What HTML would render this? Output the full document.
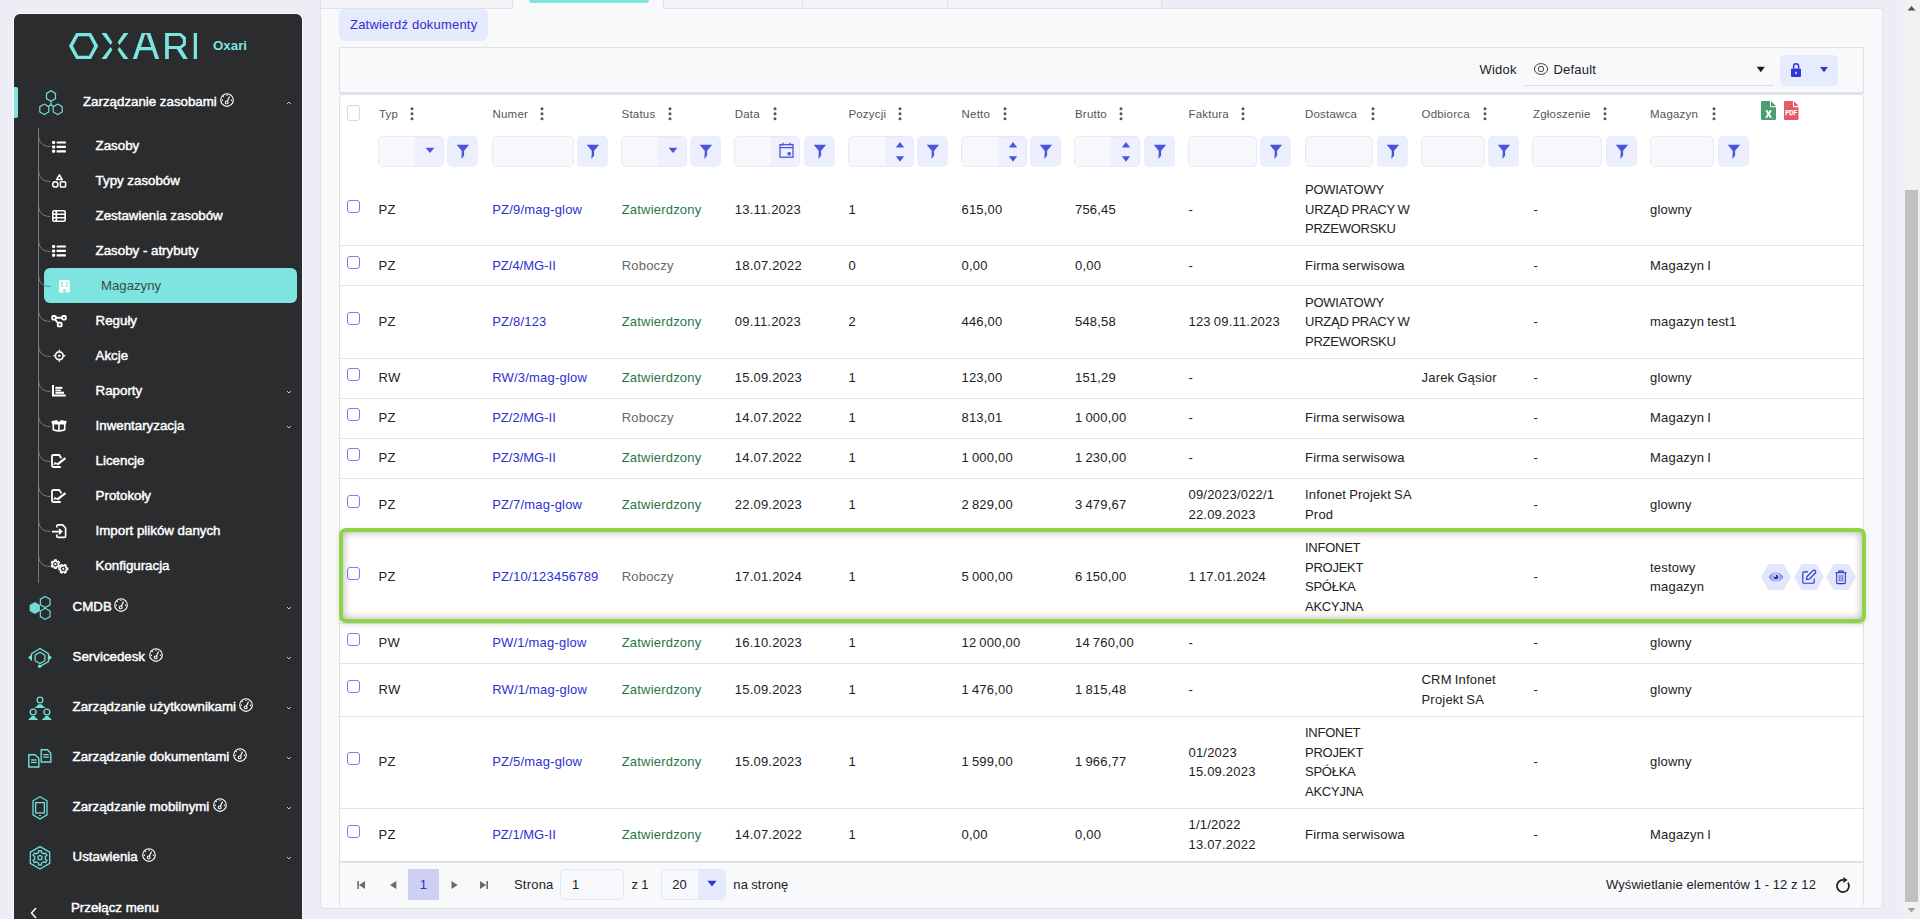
<!DOCTYPE html>
<html><head><meta charset="utf-8"><style>
html,body{margin:0;padding:0}
body{width:1920px;height:919px;overflow:hidden;position:relative;background:#ededf6;font-family:"Liberation Sans",sans-serif;}
.t{position:absolute;white-space:nowrap;line-height:1}
.a{position:absolute}
svg{position:absolute;overflow:visible}
</style></head><body>

<div class="a" style="left:13px;top:13px;width:290px;height:920px;background:#fff;border-radius:7px;opacity:.7"></div>
<div class="a" style="left:14px;top:14px;width:288px;height:920px;background:#2b2c2e;border-radius:6px"></div>
<svg style="left:0;top:0" width="320" height="80" viewBox="0 0 320 80"><g fill="#7de5e0" fill-rule="evenodd">
<path d="M76.1 33 H91.1 L98.2 46 L91.1 59 H76.1 L69 46 Z M78.2 36.3 L73 46 L78.2 55.7 H89 L94.2 46 L89 36.3 Z"/>
<path d="M101.5 33 H106.3 L112.4 42.2 L110.6 45 Z"/>
<path d="M110.6 47 L112.4 49.8 L106.3 59 H101.5 Z"/>
<path d="M128.5 33 H123.7 L117.6 42.2 L119.4 45 Z"/>
<path d="M119.4 47 L117.6 49.8 L123.7 59 H128.5 Z"/>
<path d="M132.8 59 L141.7 33 H150.3 L159.2 59 H155.2 L152.3 50.2 H139.6 L136.8 59 Z M141 46.9 H151.2 L146.6 34.5 H145 Z"/>
<path d="M165.1 33 H180.8 L185.9 37.3 V45 L181.4 48.6 L187.8 59 H183.3 L176.8 49 H168.8 V59 H165.1 Z M168.8 36.1 V45.9 H179.9 L182.9 43.4 V39.6 L179.9 36.1 Z"/>
<rect x="193.7" y="33" width="3.3" height="26"/>
</g></svg>
<div class="t" style="left:213px;top:39.44px;font-size:13.3px;color:#7de5e0;font-weight:bold;">Oxari</div>
<div class="a" style="left:14px;top:87px;width:4px;height:31px;background:#7de5e0;border-radius:0 2px 2px 0"></div>
<svg style="left:34px;top:86px" width="36" height="34" viewBox="34 86 36 34"><g fill="none" stroke="#73dcd6" stroke-width="1.2">
<polygon points="51.00,90.80 55.50,93.40 55.50,98.60 51.00,101.20 46.50,98.60 46.50,93.40"/><polygon points="44.30,104.10 48.80,106.70 48.80,111.90 44.30,114.50 39.80,111.90 39.80,106.70"/><polygon points="57.70,104.10 62.20,106.70 62.20,111.90 57.70,114.50 53.20,111.90 53.20,106.70"/>
<path d="M51 101.2 V104.6 M51 104.6 L48.8 106.2 M51 104.6 L53.2 106.2"/></g></svg>
<div class="t" style="left:83px;top:94.54px;font-size:13.3px;color:#fff;font-weight:normal;-webkit-text-stroke:.45px #fff">Zarządzanie zasobami</div>
<svg style="left:219px;top:92px" width="16" height="16" viewBox="-8 -8 16 16"><g fill="none" stroke="#fff" stroke-width="1.15"><circle r="6.3"/><path d="M0.3 1.6 L2.5 -3.4"/></g><circle cx="-0.3" cy="2.4" r="1.4" fill="none" stroke="#fff" stroke-width="1.1"/><g fill="#fff"><circle cx="-3.6" cy="-3.4" r=".7"/><circle cx="0" cy="-4.7" r=".7"/><circle cx="-4.6" cy="0.2" r=".7"/><circle cx="4.4" cy="0.2" r=".7"/></g></svg>
<svg style="left:285px;top:99px" width="8" height="8" viewBox="-4 -4 8 8"><path d="M-2 1 L0 -1 L2 1" fill="none" stroke="#bfc0c2" stroke-width="1"/></svg>
<div class="a" style="left:38px;top:128px;width:1px;height:455px;background:#7a7b7d"></div>
<div class="a" style="left:44px;top:268px;width:253px;height:35px;background:#7de4e0;border-radius:6px"></div>
<svg style="left:38px;top:134.0px" width="14" height="16" viewBox="0 0 14 16"><path d="M.5 0 C.5 8 4 12.5 12.5 12.5" fill="none" stroke="#7a7b7d" stroke-width="1"/></svg>
<svg style="left:52.3px;top:140.7px" width="17" height="15" viewBox="0 0 17 15"><g fill="#fff"><rect x="0" y="0" width="3.2" height="3" rx="1"/><rect x="0" y="4.4" width="3.2" height="3" rx="1"/><rect x="0" y="8.8" width="3.2" height="3" rx="1"/><rect x="4.6" y=".4" width="9.3" height="2.2" rx=".5"/><rect x="4.6" y="4.8" width="9.3" height="2.2" rx=".5"/><rect x="4.6" y="9.2" width="9.3" height="2.2" rx=".5"/></g></svg>
<div class="t" style="left:95.6px;top:138.84px;font-size:13.3px;color:#fff;font-weight:normal;-webkit-text-stroke:.45px #fff">Zasoby</div>
<svg style="left:38px;top:169.0px" width="14" height="16" viewBox="0 0 14 16"><path d="M.5 0 C.5 8 4 12.5 12.5 12.5" fill="none" stroke="#7a7b7d" stroke-width="1"/></svg>
<svg style="left:52.3px;top:174.2px" width="17" height="15" viewBox="0 0 17 15"><g fill="none" stroke="#fff" stroke-width="1.5"><path d="M7.4 0.9 L10.3 5.6 H4.5 Z" stroke-linejoin="round"/><circle cx="3.3" cy="10.4" r="2.6"/><rect x="8.4" y="7.7" width="5.2" height="5.3" rx=".8"/></g></svg>
<div class="t" style="left:95.6px;top:173.84px;font-size:13.3px;color:#fff;font-weight:normal;-webkit-text-stroke:.45px #fff">Typy zasobów</div>
<svg style="left:38px;top:204.0px" width="14" height="16" viewBox="0 0 14 16"><path d="M.5 0 C.5 8 4 12.5 12.5 12.5" fill="none" stroke="#7a7b7d" stroke-width="1"/></svg>
<svg style="left:52.3px;top:210px" width="17" height="15" viewBox="0 0 17 15"><g fill="none" stroke="#fff" stroke-width="1.6"><rect x=".8" y=".8" width="12.4" height="10.4" rx="1.4"/><path d="M.8 4.3 H13.2 M.8 7.8 H13.2 M4.3 .8 V11.2"/></g></svg>
<div class="t" style="left:95.6px;top:208.84px;font-size:13.3px;color:#fff;font-weight:normal;-webkit-text-stroke:.45px #fff">Zestawienia zasobów</div>
<svg style="left:38px;top:239.0px" width="14" height="16" viewBox="0 0 14 16"><path d="M.5 0 C.5 8 4 12.5 12.5 12.5" fill="none" stroke="#7a7b7d" stroke-width="1"/></svg>
<svg style="left:52.3px;top:245px" width="17" height="15" viewBox="0 0 17 15"><g fill="#fff"><rect x="0" y="0" width="3.2" height="3" rx="1"/><rect x="0" y="4.4" width="3.2" height="3" rx="1"/><rect x="0" y="8.8" width="3.2" height="3" rx="1"/><rect x="4.6" y=".4" width="9.3" height="2.2" rx=".5"/><rect x="4.6" y="4.8" width="9.3" height="2.2" rx=".5"/><rect x="4.6" y="9.2" width="9.3" height="2.2" rx=".5"/></g></svg>
<div class="t" style="left:95.6px;top:243.84px;font-size:13.3px;color:#fff;font-weight:normal;-webkit-text-stroke:.45px #fff">Zasoby - atrybuty</div>
<svg style="left:38px;top:274.0px" width="14" height="16" viewBox="0 0 14 16"><path d="M.5 0 C.5 8 4 12.5 12.5 12.5" fill="none" stroke="#7a7b7d" stroke-width="1"/></svg>
<svg style="left:58.7px;top:279.8px" width="17" height="15" viewBox="0 0 17 15"><g><rect x="0" y="0" width="10.8" height="12.5" rx="1.2" fill="#fff"/><g fill="#7de4e0"><rect x="2.2" y="2" width="1.8" height="1.8"/><rect x="6.8" y="2" width="1.8" height="1.8"/><rect x="2.2" y="5" width="1.8" height="1.8"/><rect x="6.8" y="5" width="1.8" height="1.8"/><rect x="4.3" y="9" width="2.2" height="3.5"/></g></g></svg>
<div class="t" style="left:101px;top:278.93px;font-size:13.2px;color:#3a4a4c;font-weight:normal;">Magazyny</div>
<svg style="left:38px;top:309.0px" width="14" height="16" viewBox="0 0 14 16"><path d="M.5 0 C.5 8 4 12.5 12.5 12.5" fill="none" stroke="#7a7b7d" stroke-width="1"/></svg>
<svg style="left:51.4px;top:315px" width="17" height="15" viewBox="0 0 17 15"><g fill="none" stroke="#fff" stroke-width="1.9"><rect x="1.2" y="1" width="3.6" height="3.6" rx="1"/><rect x="11.2" y="1" width="3.6" height="3.6" rx="1"/><rect x="6.8" y="7.8" width="3.8" height="3.6" rx="1"/><path d="M4.8 2.8 H11.2 M4 4.6 L7 7.8"/></g></svg>
<div class="t" style="left:95.6px;top:313.84px;font-size:13.3px;color:#fff;font-weight:normal;-webkit-text-stroke:.45px #fff">Reguły</div>
<svg style="left:38px;top:344.0px" width="14" height="16" viewBox="0 0 14 16"><path d="M.5 0 C.5 8 4 12.5 12.5 12.5" fill="none" stroke="#7a7b7d" stroke-width="1"/></svg>
<svg style="left:52.8px;top:349px" width="17" height="15" viewBox="0 0 17 15"><g fill="none" stroke="#fff" stroke-width="1.7"><circle cx="6.3" cy="6.8" r="3.9"/></g><circle cx="6.3" cy="6.8" r="1.3" fill="#fff"/><g fill="#fff"><path d="M5.3 2.2 L6.3 0 L7.3 2.2 Z"/><path d="M5.3 11.4 L6.3 13.6 L7.3 11.4 Z"/><path d="M1.7 5.8 L-.5 6.8 L1.7 7.8 Z"/><path d="M10.9 5.8 L13.1 6.8 L10.9 7.8 Z"/></g></svg>
<div class="t" style="left:95.6px;top:348.84px;font-size:13.3px;color:#fff;font-weight:normal;-webkit-text-stroke:.45px #fff">Akcje</div>
<svg style="left:38px;top:379.0px" width="14" height="16" viewBox="0 0 14 16"><path d="M.5 0 C.5 8 4 12.5 12.5 12.5" fill="none" stroke="#7a7b7d" stroke-width="1"/></svg>
<svg style="left:52.1px;top:385.2px" width="17" height="15" viewBox="0 0 17 15"><g fill="none" stroke="#fff" stroke-width="2"><path d="M1 0 V10.6 H13.8"/></g><g fill="#fff"><rect x="3.4" y="1.8" width="7" height="2.1"/><rect x="3.4" y="4.6" width="5.6" height="1.6"/><rect x="3.4" y="6.7" width="8.6" height="2.1"/></g></svg>
<div class="t" style="left:95.6px;top:383.84px;font-size:13.3px;color:#fff;font-weight:normal;-webkit-text-stroke:.45px #fff">Raporty</div>
<svg style="left:285px;top:387.5px" width="8" height="8" viewBox="-4 -4 8 8"><path d="M-2 -1 L0 1 L2 -1" fill="none" stroke="#bfc0c2" stroke-width="1"/></svg>
<svg style="left:38px;top:414.0px" width="14" height="16" viewBox="0 0 14 16"><path d="M.5 0 C.5 8 4 12.5 12.5 12.5" fill="none" stroke="#7a7b7d" stroke-width="1"/></svg>
<svg style="left:51px;top:420px" width="17" height="15" viewBox="0 0 17 15"><path d="M.3 1.2 L5.8 0 L8 2 L10.2 0 L15.7 1.2 L14.8 4.4 H1.2 Z" fill="#fff"/><g fill="none" stroke="#fff" stroke-width="1.6"><path d="M2.3 4 V9.8 Q8 12.2 13.7 9.8 V4"/><path d="M8 2.5 V11"/></g></svg>
<div class="t" style="left:95.6px;top:418.84px;font-size:13.3px;color:#fff;font-weight:normal;-webkit-text-stroke:.45px #fff">Inwentaryzacja</div>
<svg style="left:285px;top:422.5px" width="8" height="8" viewBox="-4 -4 8 8"><path d="M-2 -1 L0 1 L2 -1" fill="none" stroke="#bfc0c2" stroke-width="1"/></svg>
<svg style="left:38px;top:449.0px" width="14" height="16" viewBox="0 0 14 16"><path d="M.5 0 C.5 8 4 12.5 12.5 12.5" fill="none" stroke="#7a7b7d" stroke-width="1"/></svg>
<svg style="left:51.2px;top:454.2px" width="17" height="15" viewBox="0 0 17 15"><g fill="none" stroke="#fff" stroke-width="1.8"><path d="M10.4 4.2 L8.2 1 H2.2 A1.2 1.2 0 0 0 1 2.2 V11.8 A1.2 1.2 0 0 0 2.2 13 H9.8"/></g><path d="M6.2 10.6 L14.4 4.2" stroke="#fff" stroke-width="2.3" fill="none"/><path d="M2.8 11 L4 8.6 L5 10 L6 8.8" stroke="#fff" stroke-width="1.1" fill="none"/></svg>
<div class="t" style="left:95.6px;top:453.84px;font-size:13.3px;color:#fff;font-weight:normal;-webkit-text-stroke:.45px #fff">Licencje</div>
<svg style="left:38px;top:484.0px" width="14" height="16" viewBox="0 0 14 16"><path d="M.5 0 C.5 8 4 12.5 12.5 12.5" fill="none" stroke="#7a7b7d" stroke-width="1"/></svg>
<svg style="left:51.2px;top:489.4px" width="17" height="15" viewBox="0 0 17 15"><g fill="none" stroke="#fff" stroke-width="1.8"><path d="M10.4 4.2 L8.2 1 H2.2 A1.2 1.2 0 0 0 1 2.2 V11.8 A1.2 1.2 0 0 0 2.2 13 H9.8"/></g><path d="M6.2 10.6 L14.4 4.2" stroke="#fff" stroke-width="2.3" fill="none"/><path d="M2.8 11 L4 8.6 L5 10 L6 8.8" stroke="#fff" stroke-width="1.1" fill="none"/></svg>
<div class="t" style="left:95.6px;top:488.84px;font-size:13.3px;color:#fff;font-weight:normal;-webkit-text-stroke:.45px #fff">Protokoły</div>
<svg style="left:38px;top:519.0px" width="14" height="16" viewBox="0 0 14 16"><path d="M.5 0 C.5 8 4 12.5 12.5 12.5" fill="none" stroke="#7a7b7d" stroke-width="1"/></svg>
<svg style="left:52px;top:524.2px" width="17" height="15" viewBox="0 0 17 15"><g fill="none" stroke="#fff" stroke-width="1.7"><path d="M4.8 3.6 V2 A1.2 1.2 0 0 1 6 .9 H10.6 L13.6 4 V12.2 A1.2 1.2 0 0 1 12.4 13.3 H6 A1.2 1.2 0 0 1 4.8 12.2 V10.6"/><path d="M0 7.6 H9.6 M7 5 L9.6 7.6 L7 10.2"/></g></svg>
<div class="t" style="left:95.6px;top:523.84px;font-size:13.3px;color:#fff;font-weight:normal;-webkit-text-stroke:.45px #fff">Import plików danych</div>
<svg style="left:38px;top:554.0px" width="14" height="16" viewBox="0 0 14 16"><path d="M.5 0 C.5 8 4 12.5 12.5 12.5" fill="none" stroke="#7a7b7d" stroke-width="1"/></svg>
<svg style="left:50.6px;top:559.7px" width="17" height="15" viewBox="0 0 17 15"><g fill="none" stroke="#fff" stroke-width="1.5" stroke-linejoin="round"><path d="M2.95 1.69 L3.57 1.42 L3.53 0.09 L5.27 0.09 L5.23 1.42 L5.85 1.69 L6.39 2.09 L7.52 1.39 L8.39 2.90 L7.22 3.53 L7.30 4.20 L7.22 4.87 L8.39 5.50 L7.52 7.01 L6.39 6.31 L5.85 6.71 L5.23 6.98 L5.27 8.31 L3.53 8.31 L3.57 6.98 L2.95 6.71 L2.41 6.31 L1.28 7.01 L0.41 5.50 L1.58 4.87 L1.50 4.20 L1.58 3.53 L0.41 2.90 L1.28 1.39 L2.41 2.09 Z"/><path d="M12.30 5.80 L13.00 5.88 L13.66 4.62 L15.24 5.53 L14.48 6.74 L14.90 7.30 L15.18 7.94 L16.60 7.89 L16.60 9.71 L15.18 9.66 L14.90 10.30 L14.48 10.86 L15.24 12.07 L13.66 12.98 L13.00 11.72 L12.30 11.80 L11.60 11.72 L10.94 12.98 L9.36 12.07 L10.12 10.86 L9.70 10.30 L9.42 9.66 L8.00 9.71 L8.00 7.89 L9.42 7.94 L9.70 7.30 L10.12 6.74 L9.36 5.53 L10.94 4.62 L11.60 5.88 Z"/></g><circle cx="4.4" cy="4.2" r="1.1" fill="#fff"/><circle cx="12.3" cy="8.8" r="1.1" fill="#fff"/></svg>
<div class="t" style="left:95.6px;top:558.84px;font-size:13.3px;color:#fff;font-weight:normal;-webkit-text-stroke:.45px #fff">Konfiguracja</div>
<svg style="left:0;top:0" width="320" height="919" viewBox="0 0 320 919"><polygon points="34.80,602.10 39.91,605.05 39.91,610.95 34.80,613.90 29.69,610.95 29.69,605.05" fill="#73dcd6"/><g fill="none" stroke="#73dcd6" stroke-width="1.2"><polygon points="45.20,596.40 50.05,599.20 50.05,604.80 45.20,607.60 40.35,604.80 40.35,599.20"/><polygon points="45.20,608.20 50.05,611.00 50.05,616.60 45.20,619.40 40.35,616.60 40.35,611.00"/></g><g fill="none" stroke="#73dcd6" stroke-width="1.3"><polygon points="40.00,652.30 44.85,655.10 44.85,660.70 40.00,663.50 35.15,660.70 35.15,655.10"/><path d="M31.6 655.6 V653.6 L40 648.4 L48.4 653.6 V661.6 L40.5 666.1"/></g><polygon points="28,657.6 32,654.0 32,661.2" fill="#73dcd6"/><polygon points="52,657.6 48,654.0 48,661.2" fill="#73dcd6"/><circle cx="39.6" cy="666.2" r="1.7" fill="#73dcd6"/><g fill="none" stroke="#73dcd6" stroke-width="1.3"><circle cx="40" cy="700" r="2.9"/><circle cx="33.1" cy="712" r="2.9"/><circle cx="46.9" cy="712" r="2.9"/></g><g fill="#73dcd6"><path d="M34.5 708 L38.8 704.2 H41.2 L45.5 708 Z"/><path d="M28 720 L32 716 H34.2 L38.3 720 Z"/><path d="M41.7 720 L45.8 716 H48 L52 720 Z"/></g><g fill="none" stroke="#73dcd6" stroke-width="1.4"><path d="M28.8 754.7 H35 L38.8 758.3 V767 H28.8 Z"/><path d="M41.2 749.7 H47.4 L50.8 753.3 V762 H41.2 Z"/></g><g fill="#73dcd6"><rect x="31" y="759.3" width="5.6" height="1.3"/><rect x="31" y="761.8" width="5.6" height="1.3"/><rect x="43.2" y="754" width="5.6" height="1.3"/><rect x="43.2" y="756.5" width="5.6" height="1.3"/></g><g fill="none" stroke="#73dcd6" stroke-width="1.3"><path d="M40 796.8 L47 800.8 V814.8 L40 819 L33 814.8 V800.8 Z"/><rect x="35.6" y="802.6" width="8.8" height="10.4"/></g><rect x="39" y="815" width="2" height="1.2" fill="#73dcd6"/><g fill="none" stroke="#73dcd6" stroke-width="1.3"><polygon points="40.00,846.60 49.70,852.20 49.70,863.40 40.00,869.00 30.30,863.40 30.30,852.20"/><path d="M37.30 853.12 L38.57 852.59 L38.61 850.53 L41.39 850.53 L41.43 852.59 L42.70 853.12 L43.79 853.96 L45.60 852.96 L46.99 855.37 L45.23 856.44 L45.40 857.80 L45.23 859.16 L46.99 860.23 L45.60 862.64 L43.79 861.64 L42.70 862.48 L41.43 863.01 L41.39 865.07 L38.61 865.07 L38.57 863.01 L37.30 862.48 L36.21 861.64 L34.40 862.64 L33.01 860.23 L34.77 859.16 L34.60 857.80 L34.77 856.44 L33.01 855.37 L34.40 852.96 L36.21 853.96 Z" stroke-linejoin="round"/><circle cx="40" cy="857.8" r="2.1"/></g></svg>
<div class="t" style="left:72.6px;top:599.74px;font-size:13.3px;color:#fff;font-weight:normal;-webkit-text-stroke:.45px #fff">CMDB</div>
<svg style="left:112.5px;top:597.1px" width="16" height="16" viewBox="-8 -8 16 16"><g fill="none" stroke="#fff" stroke-width="1.15"><circle r="6.3"/><path d="M0.3 1.6 L2.5 -3.4"/></g><circle cx="-0.3" cy="2.4" r="1.4" fill="none" stroke="#fff" stroke-width="1.1"/><g fill="#fff"><circle cx="-3.6" cy="-3.4" r=".7"/><circle cx="0" cy="-4.7" r=".7"/><circle cx="-4.6" cy="0.2" r=".7"/><circle cx="4.4" cy="0.2" r=".7"/></g></svg>
<svg style="left:285px;top:603.5px" width="8" height="8" viewBox="-4 -4 8 8"><path d="M-2 -1 L0 1 L2 -1" fill="none" stroke="#bfc0c2" stroke-width="1"/></svg>
<div class="t" style="left:72.6px;top:649.74px;font-size:13.3px;color:#fff;font-weight:normal;-webkit-text-stroke:.45px #fff">Servicedesk</div>
<svg style="left:148.3px;top:647.1px" width="16" height="16" viewBox="-8 -8 16 16"><g fill="none" stroke="#fff" stroke-width="1.15"><circle r="6.3"/><path d="M0.3 1.6 L2.5 -3.4"/></g><circle cx="-0.3" cy="2.4" r="1.4" fill="none" stroke="#fff" stroke-width="1.1"/><g fill="#fff"><circle cx="-3.6" cy="-3.4" r=".7"/><circle cx="0" cy="-4.7" r=".7"/><circle cx="-4.6" cy="0.2" r=".7"/><circle cx="4.4" cy="0.2" r=".7"/></g></svg>
<svg style="left:285px;top:653.5px" width="8" height="8" viewBox="-4 -4 8 8"><path d="M-2 -1 L0 1 L2 -1" fill="none" stroke="#bfc0c2" stroke-width="1"/></svg>
<div class="t" style="left:72.6px;top:699.74px;font-size:13.3px;color:#fff;font-weight:normal;-webkit-text-stroke:.45px #fff">Zarządzanie użytkownikami</div>
<svg style="left:238.2px;top:697.1px" width="16" height="16" viewBox="-8 -8 16 16"><g fill="none" stroke="#fff" stroke-width="1.15"><circle r="6.3"/><path d="M0.3 1.6 L2.5 -3.4"/></g><circle cx="-0.3" cy="2.4" r="1.4" fill="none" stroke="#fff" stroke-width="1.1"/><g fill="#fff"><circle cx="-3.6" cy="-3.4" r=".7"/><circle cx="0" cy="-4.7" r=".7"/><circle cx="-4.6" cy="0.2" r=".7"/><circle cx="4.4" cy="0.2" r=".7"/></g></svg>
<svg style="left:285px;top:703.5px" width="8" height="8" viewBox="-4 -4 8 8"><path d="M-2 -1 L0 1 L2 -1" fill="none" stroke="#bfc0c2" stroke-width="1"/></svg>
<div class="t" style="left:72.6px;top:749.74px;font-size:13.3px;color:#fff;font-weight:normal;-webkit-text-stroke:.45px #fff">Zarządzanie dokumentami</div>
<svg style="left:232px;top:747.1px" width="16" height="16" viewBox="-8 -8 16 16"><g fill="none" stroke="#fff" stroke-width="1.15"><circle r="6.3"/><path d="M0.3 1.6 L2.5 -3.4"/></g><circle cx="-0.3" cy="2.4" r="1.4" fill="none" stroke="#fff" stroke-width="1.1"/><g fill="#fff"><circle cx="-3.6" cy="-3.4" r=".7"/><circle cx="0" cy="-4.7" r=".7"/><circle cx="-4.6" cy="0.2" r=".7"/><circle cx="4.4" cy="0.2" r=".7"/></g></svg>
<svg style="left:285px;top:753.5px" width="8" height="8" viewBox="-4 -4 8 8"><path d="M-2 -1 L0 1 L2 -1" fill="none" stroke="#bfc0c2" stroke-width="1"/></svg>
<div class="t" style="left:72.6px;top:799.74px;font-size:13.3px;color:#fff;font-weight:normal;-webkit-text-stroke:.45px #fff">Zarządzanie mobilnymi</div>
<svg style="left:211.5px;top:797.1px" width="16" height="16" viewBox="-8 -8 16 16"><g fill="none" stroke="#fff" stroke-width="1.15"><circle r="6.3"/><path d="M0.3 1.6 L2.5 -3.4"/></g><circle cx="-0.3" cy="2.4" r="1.4" fill="none" stroke="#fff" stroke-width="1.1"/><g fill="#fff"><circle cx="-3.6" cy="-3.4" r=".7"/><circle cx="0" cy="-4.7" r=".7"/><circle cx="-4.6" cy="0.2" r=".7"/><circle cx="4.4" cy="0.2" r=".7"/></g></svg>
<svg style="left:285px;top:803.5px" width="8" height="8" viewBox="-4 -4 8 8"><path d="M-2 -1 L0 1 L2 -1" fill="none" stroke="#bfc0c2" stroke-width="1"/></svg>
<div class="t" style="left:72.6px;top:849.74px;font-size:13.3px;color:#fff;font-weight:normal;-webkit-text-stroke:.45px #fff">Ustawienia</div>
<svg style="left:140.6px;top:847.1px" width="16" height="16" viewBox="-8 -8 16 16"><g fill="none" stroke="#fff" stroke-width="1.15"><circle r="6.3"/><path d="M0.3 1.6 L2.5 -3.4"/></g><circle cx="-0.3" cy="2.4" r="1.4" fill="none" stroke="#fff" stroke-width="1.1"/><g fill="#fff"><circle cx="-3.6" cy="-3.4" r=".7"/><circle cx="0" cy="-4.7" r=".7"/><circle cx="-4.6" cy="0.2" r=".7"/><circle cx="4.4" cy="0.2" r=".7"/></g></svg>
<svg style="left:285px;top:853.5px" width="8" height="8" viewBox="-4 -4 8 8"><path d="M-2 -1 L0 1 L2 -1" fill="none" stroke="#bfc0c2" stroke-width="1"/></svg>
<div class="t" style="left:71px;top:900.74px;font-size:13.3px;color:#fff;font-weight:normal;-webkit-text-stroke:.45px #fff">Przełącz menu</div>
<svg style="left:28px;top:904px" width="12" height="16" viewBox="0 0 12 16"><path d="M8 4 L3.5 9 L8 14" fill="none" stroke="#fff" stroke-width="1.5"/></svg>
<div class="a" style="left:320px;top:-2px;width:841px;height:10px;background:#f4f4f8"></div>
<div class="a" style="left:320px;top:-2px;width:1px;height:10px;background:#dfe1e6"></div>
<div class="a" style="left:512px;top:-2px;width:1px;height:10px;background:#dfe1e6"></div>
<div class="a" style="left:663px;top:-2px;width:1px;height:10px;background:#dfe1e6"></div>
<div class="a" style="left:802px;top:-2px;width:1px;height:10px;background:#dfe1e6"></div>
<div class="a" style="left:947px;top:-2px;width:1px;height:10px;background:#dfe1e6"></div>
<div class="a" style="left:1161px;top:-2px;width:1px;height:10px;background:#dfe1e6"></div>
<div class="a" style="left:513px;top:-2px;width:150px;height:11px;background:#f8f9fb"></div>
<div class="a" style="left:529px;top:0px;width:120px;height:3px;background:#7de4e0;border-radius:0 0 3px 3px"></div>
<div class="a" style="left:320px;top:8px;width:1561px;height:899px;background:#f8f9fb;border:1px solid #dfe1e6;border-radius:0 0 4px 4px"></div>
<div class="a" style="left:513px;top:8px;width:150px;height:1px;background:#f8f9fb"></div>
<div class="a" style="left:339px;top:9px;width:149px;height:32px;background:#e5eafc;border-radius:6px"></div>
<div class="t" style="left:350px;top:18.00px;font-size:13px;color:#2d30cc;font-weight:normal;letter-spacing:.2px">Zatwierdź dokumenty</div>
<div class="a" style="left:339px;top:47px;width:1523px;height:44px;background:#f8f9fb;border:1px solid #dfe1e6;border-bottom:2px solid #dfe1e6"></div>
<div class="t" style="left:1479.5px;top:63.40px;font-size:13px;color:#222;font-weight:normal;letter-spacing:.2px">Widok</div>
<svg style="left:1532px;top:61px" width="18" height="16" viewBox="0 0 18 16"><g fill="none" stroke="#444" stroke-width="1"><ellipse cx="9" cy="8" rx="6.6" ry="5.4"/><circle cx="9" cy="8" r="2.7"/></g></svg>
<div class="t" style="left:1553.5px;top:63.40px;font-size:13px;color:#222;font-weight:normal;letter-spacing:.2px">Default</div>
<svg style="left:1755px;top:65px" width="12" height="10" viewBox="0 0 12 10"><path d="M1.7 1.8 H9.9 L5.8 7.3 Z" fill="#1c1c1c"/></svg>
<div class="a" style="left:1524px;top:85px;width:250px;height:1px;background:#dcdde2"></div>
<div class="a" style="left:1780px;top:55px;width:58px;height:31px;background:#e6ebfd;border-radius:5px"></div>
<svg style="left:1789px;top:61px" width="14" height="18" viewBox="0 0 14 18"><path d="M4.6 7.5 V5.4 A2.5 2.7 0 0 1 9.6 5.4 V7.5" fill="none" stroke="#2f37d6" stroke-width="1.5"/><rect x="2" y="7.5" width="10" height="8.5" rx="1" fill="#2f37d6"/><rect x="6.2" y="10.8" width="1.6" height="2.2" fill="#e5eafc"/></svg>
<svg style="left:1818px;top:66px" width="12" height="10" viewBox="0 0 12 10"><path d="M1 1 H8.8 L4.9 6.2 Z" fill="#2f37d6" transform="translate(1.1 0)"/></svg>
<div class="a" style="left:339px;top:94px;width:1523px;height:812px;background:#fff;border:1px solid #dfe1e6;border-radius:5px 5px 4px 4px;overflow:hidden"></div>
<div class="a" style="left:347px;top:105px;width:11px;height:14px;border:1px solid #d3d8e1;border-radius:3px;background:#fff"></div>
<div class="t" style="left:379px;top:108.97px;font-size:11.5px;color:#555;font-weight:normal;letter-spacing:.2px">Typ</div>
<svg style="left:410.3px;top:106px" width="4" height="15" viewBox="0 0 4 15"><g fill="#555"><circle cx="2" cy="2.7" r="1.5"/><circle cx="2" cy="7.7" r="1.5"/><circle cx="2" cy="12.7" r="1.5"/></g></svg>
<div class="a" style="left:378px;top:136px;width:64px;height:29px;background:#f7f8fb;border:1px solid #e6e9f8;border-radius:5px;overflow:hidden"><div class="a" style="left:36px;top:0;width:28px;height:29px;background:#eef0fd"></div></div>
<svg style="left:425px;top:147px" width="10" height="8" viewBox="0 0 10 8"><path d="M.6 .8 H9.4 L5 6 Z" fill="#4b55d8"/></svg>
<div class="a" style="left:447px;top:136px;width:31px;height:31px;background:#ebeffd;border-radius:5px"></div>
<svg style="left:456px;top:144px" width="14" height="16" viewBox="0 0 14 16"><path d="M.7 .8 H13.1 L8 6.9 L8.2 11.6 L5.4 14.9 L5.8 6.9 Z" fill="#4b55d8"/></svg>
<div class="t" style="left:492.5px;top:108.97px;font-size:11.5px;color:#555;font-weight:normal;letter-spacing:.2px">Numer</div>
<svg style="left:540.2px;top:106px" width="4" height="15" viewBox="0 0 4 15"><g fill="#555"><circle cx="2" cy="2.7" r="1.5"/><circle cx="2" cy="7.7" r="1.5"/><circle cx="2" cy="12.7" r="1.5"/></g></svg>
<div class="a" style="left:492px;top:136px;width:80px;height:29px;background:#f7f8fb;border:1px solid #e6e9f8;border-radius:5px;overflow:hidden"></div>
<div class="a" style="left:577px;top:136px;width:31px;height:31px;background:#ebeffd;border-radius:5px"></div>
<svg style="left:586px;top:144px" width="14" height="16" viewBox="0 0 14 16"><path d="M.7 .8 H13.1 L8 6.9 L8.2 11.6 L5.4 14.9 L5.8 6.9 Z" fill="#4b55d8"/></svg>
<div class="t" style="left:621.6px;top:108.97px;font-size:11.5px;color:#555;font-weight:normal;letter-spacing:.2px">Status</div>
<svg style="left:667.5px;top:106px" width="4" height="15" viewBox="0 0 4 15"><g fill="#555"><circle cx="2" cy="2.7" r="1.5"/><circle cx="2" cy="7.7" r="1.5"/><circle cx="2" cy="12.7" r="1.5"/></g></svg>
<div class="a" style="left:621px;top:136px;width:64px;height:29px;background:#f7f8fb;border:1px solid #e6e9f8;border-radius:5px;overflow:hidden"><div class="a" style="left:36px;top:0;width:28px;height:29px;background:#eef0fd"></div></div>
<svg style="left:668px;top:147px" width="10" height="8" viewBox="0 0 10 8"><path d="M.6 .8 H9.4 L5 6 Z" fill="#4b55d8"/></svg>
<div class="a" style="left:690px;top:136px;width:31px;height:31px;background:#ebeffd;border-radius:5px"></div>
<svg style="left:699px;top:144px" width="14" height="16" viewBox="0 0 14 16"><path d="M.7 .8 H13.1 L8 6.9 L8.2 11.6 L5.4 14.9 L5.8 6.9 Z" fill="#4b55d8"/></svg>
<div class="t" style="left:734.7px;top:108.97px;font-size:11.5px;color:#555;font-weight:normal;letter-spacing:.2px">Data</div>
<svg style="left:772.5px;top:106px" width="4" height="15" viewBox="0 0 4 15"><g fill="#555"><circle cx="2" cy="2.7" r="1.5"/><circle cx="2" cy="7.7" r="1.5"/><circle cx="2" cy="12.7" r="1.5"/></g></svg>
<div class="a" style="left:734px;top:136px;width:64px;height:29px;background:#f7f8fb;border:1px solid #e6e9f8;border-radius:5px;overflow:hidden"><div class="a" style="left:36px;top:0;width:28px;height:29px;background:#eef0fd"></div></div>
<svg style="left:779px;top:142px" width="15" height="17" viewBox="0 0 15 17"><g fill="none" stroke="#4b55d8" stroke-width="1.3"><rect x="1" y="2.6" width="13" height="12.6"/><path d="M1 5.6 H14"/><path d="M4 .8 V3.6 M11 .8 V3.6"/></g><rect x="8.6" y="10.2" width="3.2" height="3.2" fill="#4b55d8"/></svg>
<div class="a" style="left:804px;top:136px;width:31px;height:31px;background:#ebeffd;border-radius:5px"></div>
<svg style="left:813px;top:144px" width="14" height="16" viewBox="0 0 14 16"><path d="M.7 .8 H13.1 L8 6.9 L8.2 11.6 L5.4 14.9 L5.8 6.9 Z" fill="#4b55d8"/></svg>
<div class="t" style="left:848.4px;top:108.97px;font-size:11.5px;color:#555;font-weight:normal;letter-spacing:.2px">Pozycji</div>
<svg style="left:898.3px;top:106px" width="4" height="15" viewBox="0 0 4 15"><g fill="#555"><circle cx="2" cy="2.7" r="1.5"/><circle cx="2" cy="7.7" r="1.5"/><circle cx="2" cy="12.7" r="1.5"/></g></svg>
<div class="a" style="left:848px;top:136px;width:64px;height:29px;background:#f7f8fb;border:1px solid #e6e9f8;border-radius:5px;overflow:hidden"><div class="a" style="left:36px;top:0;width:28px;height:29px;background:#eef0fd"></div></div>
<svg style="left:895px;top:141.6px" width="10" height="20" viewBox="0 0 10 20"><g fill="#4b55d8"><path d="M.9 5.4 H9.1 L5 0 Z"/><path d="M.9 14.2 H9.1 L5 19.7 Z"/></g></svg>
<div class="a" style="left:917px;top:136px;width:31px;height:31px;background:#ebeffd;border-radius:5px"></div>
<svg style="left:926px;top:144px" width="14" height="16" viewBox="0 0 14 16"><path d="M.7 .8 H13.1 L8 6.9 L8.2 11.6 L5.4 14.9 L5.8 6.9 Z" fill="#4b55d8"/></svg>
<div class="t" style="left:961.6px;top:108.97px;font-size:11.5px;color:#555;font-weight:normal;letter-spacing:.2px">Netto</div>
<svg style="left:1002.5px;top:106px" width="4" height="15" viewBox="0 0 4 15"><g fill="#555"><circle cx="2" cy="2.7" r="1.5"/><circle cx="2" cy="7.7" r="1.5"/><circle cx="2" cy="12.7" r="1.5"/></g></svg>
<div class="a" style="left:961px;top:136px;width:64px;height:29px;background:#f7f8fb;border:1px solid #e6e9f8;border-radius:5px;overflow:hidden"><div class="a" style="left:36px;top:0;width:28px;height:29px;background:#eef0fd"></div></div>
<svg style="left:1008px;top:141.6px" width="10" height="20" viewBox="0 0 10 20"><g fill="#4b55d8"><path d="M.9 5.4 H9.1 L5 0 Z"/><path d="M.9 14.2 H9.1 L5 19.7 Z"/></g></svg>
<div class="a" style="left:1030px;top:136px;width:31px;height:31px;background:#ebeffd;border-radius:5px"></div>
<svg style="left:1039px;top:144px" width="14" height="16" viewBox="0 0 14 16"><path d="M.7 .8 H13.1 L8 6.9 L8.2 11.6 L5.4 14.9 L5.8 6.9 Z" fill="#4b55d8"/></svg>
<div class="t" style="left:1075px;top:108.97px;font-size:11.5px;color:#555;font-weight:normal;letter-spacing:.2px">Brutto</div>
<svg style="left:1119.4px;top:106px" width="4" height="15" viewBox="0 0 4 15"><g fill="#555"><circle cx="2" cy="2.7" r="1.5"/><circle cx="2" cy="7.7" r="1.5"/><circle cx="2" cy="12.7" r="1.5"/></g></svg>
<div class="a" style="left:1074px;top:136px;width:64px;height:29px;background:#f7f8fb;border:1px solid #e6e9f8;border-radius:5px;overflow:hidden"><div class="a" style="left:36px;top:0;width:28px;height:29px;background:#eef0fd"></div></div>
<svg style="left:1121px;top:141.6px" width="10" height="20" viewBox="0 0 10 20"><g fill="#4b55d8"><path d="M.9 5.4 H9.1 L5 0 Z"/><path d="M.9 14.2 H9.1 L5 19.7 Z"/></g></svg>
<div class="a" style="left:1143.5px;top:136px;width:31px;height:31px;background:#ebeffd;border-radius:5px"></div>
<svg style="left:1152.5px;top:144px" width="14" height="16" viewBox="0 0 14 16"><path d="M.7 .8 H13.1 L8 6.9 L8.2 11.6 L5.4 14.9 L5.8 6.9 Z" fill="#4b55d8"/></svg>
<div class="t" style="left:1188.5px;top:108.97px;font-size:11.5px;color:#555;font-weight:normal;letter-spacing:.2px">Faktura</div>
<svg style="left:1241px;top:106px" width="4" height="15" viewBox="0 0 4 15"><g fill="#555"><circle cx="2" cy="2.7" r="1.5"/><circle cx="2" cy="7.7" r="1.5"/><circle cx="2" cy="12.7" r="1.5"/></g></svg>
<div class="a" style="left:1188px;top:136px;width:67px;height:29px;background:#f7f8fb;border:1px solid #e6e9f8;border-radius:5px;overflow:hidden"></div>
<div class="a" style="left:1260px;top:136px;width:31px;height:31px;background:#ebeffd;border-radius:5px"></div>
<svg style="left:1269px;top:144px" width="14" height="16" viewBox="0 0 14 16"><path d="M.7 .8 H13.1 L8 6.9 L8.2 11.6 L5.4 14.9 L5.8 6.9 Z" fill="#4b55d8"/></svg>
<div class="t" style="left:1305px;top:108.97px;font-size:11.5px;color:#555;font-weight:normal;letter-spacing:.2px">Dostawca</div>
<svg style="left:1371px;top:106px" width="4" height="15" viewBox="0 0 4 15"><g fill="#555"><circle cx="2" cy="2.7" r="1.5"/><circle cx="2" cy="7.7" r="1.5"/><circle cx="2" cy="12.7" r="1.5"/></g></svg>
<div class="a" style="left:1305px;top:136px;width:66px;height:29px;background:#f7f8fb;border:1px solid #e6e9f8;border-radius:5px;overflow:hidden"></div>
<div class="a" style="left:1377px;top:136px;width:31px;height:31px;background:#ebeffd;border-radius:5px"></div>
<svg style="left:1386px;top:144px" width="14" height="16" viewBox="0 0 14 16"><path d="M.7 .8 H13.1 L8 6.9 L8.2 11.6 L5.4 14.9 L5.8 6.9 Z" fill="#4b55d8"/></svg>
<div class="t" style="left:1421.5px;top:108.97px;font-size:11.5px;color:#555;font-weight:normal;letter-spacing:.2px">Odbiorca</div>
<svg style="left:1483px;top:106px" width="4" height="15" viewBox="0 0 4 15"><g fill="#555"><circle cx="2" cy="2.7" r="1.5"/><circle cx="2" cy="7.7" r="1.5"/><circle cx="2" cy="12.7" r="1.5"/></g></svg>
<div class="a" style="left:1421px;top:136px;width:62px;height:29px;background:#f7f8fb;border:1px solid #e6e9f8;border-radius:5px;overflow:hidden"></div>
<div class="a" style="left:1488px;top:136px;width:31px;height:31px;background:#ebeffd;border-radius:5px"></div>
<svg style="left:1497px;top:144px" width="14" height="16" viewBox="0 0 14 16"><path d="M.7 .8 H13.1 L8 6.9 L8.2 11.6 L5.4 14.9 L5.8 6.9 Z" fill="#4b55d8"/></svg>
<div class="t" style="left:1533px;top:108.97px;font-size:11.5px;color:#555;font-weight:normal;letter-spacing:.2px">Zgłoszenie</div>
<svg style="left:1603px;top:106px" width="4" height="15" viewBox="0 0 4 15"><g fill="#555"><circle cx="2" cy="2.7" r="1.5"/><circle cx="2" cy="7.7" r="1.5"/><circle cx="2" cy="12.7" r="1.5"/></g></svg>
<div class="a" style="left:1532px;top:136px;width:68px;height:29px;background:#f7f8fb;border:1px solid #e6e9f8;border-radius:5px;overflow:hidden"></div>
<div class="a" style="left:1606px;top:136px;width:31px;height:31px;background:#ebeffd;border-radius:5px"></div>
<svg style="left:1615px;top:144px" width="14" height="16" viewBox="0 0 14 16"><path d="M.7 .8 H13.1 L8 6.9 L8.2 11.6 L5.4 14.9 L5.8 6.9 Z" fill="#4b55d8"/></svg>
<div class="t" style="left:1650px;top:108.97px;font-size:11.5px;color:#555;font-weight:normal;letter-spacing:.2px">Magazyn</div>
<svg style="left:1712px;top:106px" width="4" height="15" viewBox="0 0 4 15"><g fill="#555"><circle cx="2" cy="2.7" r="1.5"/><circle cx="2" cy="7.7" r="1.5"/><circle cx="2" cy="12.7" r="1.5"/></g></svg>
<div class="a" style="left:1650px;top:136px;width:62px;height:29px;background:#f7f8fb;border:1px solid #e6e9f8;border-radius:5px;overflow:hidden"></div>
<div class="a" style="left:1717.5px;top:136px;width:31px;height:31px;background:#ebeffd;border-radius:5px"></div>
<svg style="left:1726.5px;top:144px" width="14" height="16" viewBox="0 0 14 16"><path d="M.7 .8 H13.1 L8 6.9 L8.2 11.6 L5.4 14.9 L5.8 6.9 Z" fill="#4b55d8"/></svg>
<svg style="left:1761px;top:101px" width="16" height="20" viewBox="0 0 16 20"><path d="M1.3 0 H9 V5 A1.2 1.2 0 0 0 10.2 6.2 H15 V17.8 A1.3 1.3 0 0 1 13.7 19.1 H1.3 A1.3 1.3 0 0 1 0 17.8 V1.3 A1.3 1.3 0 0 1 1.3 0 Z" fill="#4a9e71"/><path d="M10 0 L15 5.2 H10 Z" fill="#4a9e71"/><path d="M4.3 9.2 H6.6 L7.6 11.3 L8.6 9.2 H10.9 L8.9 13 L11 16.8 H8.7 L7.6 14.6 L6.5 16.8 H4.2 L6.3 13 Z" fill="#fff"/></svg>
<svg style="left:1783.5px;top:101px" width="16" height="20" viewBox="0 0 16 20"><path d="M1.3 0 H9 V5 A1.2 1.2 0 0 0 10.2 6.2 H14.5 V17.8 A1.3 1.3 0 0 1 13.2 19.1 H1.3 A1.3 1.3 0 0 1 0 17.8 V1.3 A1.3 1.3 0 0 1 1.3 0 Z" fill="#e45a69"/><path d="M10 0 L14.5 5 H10 Z" fill="#e45a69"/><text x="7.2" y="14.4" font-family="Liberation Sans" font-weight="bold" font-size="7.8" fill="#fff" stroke="#fff" stroke-width=".25" text-anchor="middle" textLength="12" lengthAdjust="spacingAndGlyphs">PDF</text></svg>
<div class="a" style="left:340px;top:245px;width:1523px;height:1px;background:#e4e5e9"></div>
<div class="a" style="left:340px;top:285px;width:1523px;height:1px;background:#e4e5e9"></div>
<div class="a" style="left:340px;top:358px;width:1523px;height:1px;background:#e4e5e9"></div>
<div class="a" style="left:340px;top:398px;width:1523px;height:1px;background:#e4e5e9"></div>
<div class="a" style="left:340px;top:438px;width:1523px;height:1px;background:#e4e5e9"></div>
<div class="a" style="left:340px;top:478px;width:1523px;height:1px;background:#e4e5e9"></div>
<div class="a" style="left:340px;top:531px;width:1523px;height:1px;background:#e4e5e9"></div>
<div class="a" style="left:340px;top:623px;width:1523px;height:1px;background:#e4e5e9"></div>
<div class="a" style="left:340px;top:663px;width:1523px;height:1px;background:#e4e5e9"></div>
<div class="a" style="left:340px;top:716px;width:1523px;height:1px;background:#e4e5e9"></div>
<div class="a" style="left:340px;top:808px;width:1523px;height:1px;background:#e4e5e9"></div>
<div class="a" style="left:347px;top:199.7px;width:11px;height:11px;border:1.2px solid #7a7ef0;border-radius:3px;background:#fff"></div>
<div class="t" style="left:378.6px;top:202.65px;font-size:13px;color:#222;font-weight:normal;letter-spacing:.2px;word-spacing:-.8px">PZ</div>
<div class="t" style="left:492.2px;top:202.65px;font-size:13px;color:#2d30d2;font-weight:normal;letter-spacing:.2px;word-spacing:-.8px">PZ/9/mag-glow</div>
<div class="t" style="left:621.7px;top:202.65px;font-size:13px;color:#257645;font-weight:normal;letter-spacing:.2px;word-spacing:-.8px">Zatwierdzony</div>
<div class="t" style="left:734.8px;top:202.65px;font-size:13px;color:#222;font-weight:normal;letter-spacing:.2px;word-spacing:-.8px">13.11.2023</div>
<div class="t" style="left:848.4px;top:202.65px;font-size:13px;color:#222;font-weight:normal;letter-spacing:.2px;word-spacing:-.8px">1</div>
<div class="t" style="left:961.5px;top:202.65px;font-size:13px;color:#222;font-weight:normal;letter-spacing:.2px;word-spacing:-.8px">615,00</div>
<div class="t" style="left:1075px;top:202.65px;font-size:13px;color:#222;font-weight:normal;letter-spacing:.2px;word-spacing:-.8px">756,45</div>
<div class="t" style="left:1188.5px;top:202.65px;font-size:13px;color:#222;font-weight:normal;letter-spacing:.2px;word-spacing:-.8px">-</div>
<div class="t" style="left:1305px;top:183.15px;font-size:13px;color:#222;font-weight:normal;letter-spacing:-.25px;word-spacing:-.5px">POWIATOWY</div>
<div class="t" style="left:1305px;top:202.65px;font-size:13px;color:#222;font-weight:normal;letter-spacing:-.25px;word-spacing:-.5px">URZĄD PRACY W</div>
<div class="t" style="left:1305px;top:222.15px;font-size:13px;color:#222;font-weight:normal;letter-spacing:-.25px;word-spacing:-.5px">PRZEWORSKU</div>
<div class="t" style="left:1533.5px;top:202.65px;font-size:13px;color:#222;font-weight:normal;letter-spacing:.2px;word-spacing:-.8px">-</div>
<div class="t" style="left:1650px;top:202.65px;font-size:13px;color:#222;font-weight:normal;letter-spacing:.2px;word-spacing:-.8px">glowny</div>
<div class="a" style="left:347px;top:255.9px;width:11px;height:11px;border:1.2px solid #7a7ef0;border-radius:3px;background:#fff"></div>
<div class="t" style="left:378.6px;top:258.90px;font-size:13px;color:#222;font-weight:normal;letter-spacing:.2px;word-spacing:-.8px">PZ</div>
<div class="t" style="left:492.2px;top:258.90px;font-size:13px;color:#2d30d2;font-weight:normal;letter-spacing:0px">PZ/4/MG-II</div>
<div class="t" style="left:621.7px;top:258.90px;font-size:13px;color:#676767;font-weight:normal;letter-spacing:.2px;word-spacing:-.8px">Roboczy</div>
<div class="t" style="left:734.8px;top:258.90px;font-size:13px;color:#222;font-weight:normal;letter-spacing:.2px;word-spacing:-.8px">18.07.2022</div>
<div class="t" style="left:848.4px;top:258.90px;font-size:13px;color:#222;font-weight:normal;letter-spacing:.2px;word-spacing:-.8px">0</div>
<div class="t" style="left:961.5px;top:258.90px;font-size:13px;color:#222;font-weight:normal;letter-spacing:.2px;word-spacing:-.8px">0,00</div>
<div class="t" style="left:1075px;top:258.90px;font-size:13px;color:#222;font-weight:normal;letter-spacing:.2px;word-spacing:-.8px">0,00</div>
<div class="t" style="left:1188.5px;top:258.90px;font-size:13px;color:#222;font-weight:normal;letter-spacing:.2px;word-spacing:-.8px">-</div>
<div class="t" style="left:1305px;top:258.90px;font-size:13px;color:#222;font-weight:normal;letter-spacing:.2px;word-spacing:-.8px">Firma serwisowa</div>
<div class="t" style="left:1533.5px;top:258.90px;font-size:13px;color:#222;font-weight:normal;letter-spacing:.2px;word-spacing:-.8px">-</div>
<div class="t" style="left:1650px;top:258.90px;font-size:13px;color:#222;font-weight:normal;letter-spacing:.2px;word-spacing:-.8px">Magazyn I</div>
<div class="a" style="left:347px;top:312.1px;width:11px;height:11px;border:1.2px solid #7a7ef0;border-radius:3px;background:#fff"></div>
<div class="t" style="left:378.6px;top:315.15px;font-size:13px;color:#222;font-weight:normal;letter-spacing:.2px;word-spacing:-.8px">PZ</div>
<div class="t" style="left:492.2px;top:315.15px;font-size:13px;color:#2d30d2;font-weight:normal;letter-spacing:.2px;word-spacing:-.8px">PZ/8/123</div>
<div class="t" style="left:621.7px;top:315.15px;font-size:13px;color:#257645;font-weight:normal;letter-spacing:.2px;word-spacing:-.8px">Zatwierdzony</div>
<div class="t" style="left:734.8px;top:315.15px;font-size:13px;color:#222;font-weight:normal;letter-spacing:.2px;word-spacing:-.8px">09.11.2023</div>
<div class="t" style="left:848.4px;top:315.15px;font-size:13px;color:#222;font-weight:normal;letter-spacing:.2px;word-spacing:-.8px">2</div>
<div class="t" style="left:961.5px;top:315.15px;font-size:13px;color:#222;font-weight:normal;letter-spacing:.2px;word-spacing:-.8px">446,00</div>
<div class="t" style="left:1075px;top:315.15px;font-size:13px;color:#222;font-weight:normal;letter-spacing:.2px;word-spacing:-.8px">548,58</div>
<div class="t" style="left:1188.5px;top:315.15px;font-size:13px;color:#222;font-weight:normal;letter-spacing:.2px;word-spacing:-.8px">123 09.11.2023</div>
<div class="t" style="left:1305px;top:295.65px;font-size:13px;color:#222;font-weight:normal;letter-spacing:-.25px;word-spacing:-.5px">POWIATOWY</div>
<div class="t" style="left:1305px;top:315.15px;font-size:13px;color:#222;font-weight:normal;letter-spacing:-.25px;word-spacing:-.5px">URZĄD PRACY W</div>
<div class="t" style="left:1305px;top:334.65px;font-size:13px;color:#222;font-weight:normal;letter-spacing:-.25px;word-spacing:-.5px">PRZEWORSKU</div>
<div class="t" style="left:1533.5px;top:315.15px;font-size:13px;color:#222;font-weight:normal;letter-spacing:.2px;word-spacing:-.8px">-</div>
<div class="t" style="left:1650px;top:315.15px;font-size:13px;color:#222;font-weight:normal;letter-spacing:.2px;word-spacing:-.8px">magazyn test1</div>
<div class="a" style="left:347px;top:368.4px;width:11px;height:11px;border:1.2px solid #7a7ef0;border-radius:3px;background:#fff"></div>
<div class="t" style="left:378.6px;top:371.40px;font-size:13px;color:#222;font-weight:normal;letter-spacing:.2px;word-spacing:-.8px">RW</div>
<div class="t" style="left:492.2px;top:371.40px;font-size:13px;color:#2d30d2;font-weight:normal;letter-spacing:.2px;word-spacing:-.8px">RW/3/mag-glow</div>
<div class="t" style="left:621.7px;top:371.40px;font-size:13px;color:#257645;font-weight:normal;letter-spacing:.2px;word-spacing:-.8px">Zatwierdzony</div>
<div class="t" style="left:734.8px;top:371.40px;font-size:13px;color:#222;font-weight:normal;letter-spacing:.2px;word-spacing:-.8px">15.09.2023</div>
<div class="t" style="left:848.4px;top:371.40px;font-size:13px;color:#222;font-weight:normal;letter-spacing:.2px;word-spacing:-.8px">1</div>
<div class="t" style="left:961.5px;top:371.40px;font-size:13px;color:#222;font-weight:normal;letter-spacing:.2px;word-spacing:-.8px">123,00</div>
<div class="t" style="left:1075px;top:371.40px;font-size:13px;color:#222;font-weight:normal;letter-spacing:.2px;word-spacing:-.8px">151,29</div>
<div class="t" style="left:1188.5px;top:371.40px;font-size:13px;color:#222;font-weight:normal;letter-spacing:.2px;word-spacing:-.8px">-</div>
<div class="t" style="left:1421.5px;top:371.40px;font-size:13px;color:#222;font-weight:normal;letter-spacing:.2px;word-spacing:-.8px">Jarek Gąsior</div>
<div class="t" style="left:1533.5px;top:371.40px;font-size:13px;color:#222;font-weight:normal;letter-spacing:.2px;word-spacing:-.8px">-</div>
<div class="t" style="left:1650px;top:371.40px;font-size:13px;color:#222;font-weight:normal;letter-spacing:.2px;word-spacing:-.8px">glowny</div>
<div class="a" style="left:347px;top:408.4px;width:11px;height:11px;border:1.2px solid #7a7ef0;border-radius:3px;background:#fff"></div>
<div class="t" style="left:378.6px;top:411.40px;font-size:13px;color:#222;font-weight:normal;letter-spacing:.2px;word-spacing:-.8px">PZ</div>
<div class="t" style="left:492.2px;top:411.40px;font-size:13px;color:#2d30d2;font-weight:normal;letter-spacing:0px">PZ/2/MG-II</div>
<div class="t" style="left:621.7px;top:411.40px;font-size:13px;color:#676767;font-weight:normal;letter-spacing:.2px;word-spacing:-.8px">Roboczy</div>
<div class="t" style="left:734.8px;top:411.40px;font-size:13px;color:#222;font-weight:normal;letter-spacing:.2px;word-spacing:-.8px">14.07.2022</div>
<div class="t" style="left:848.4px;top:411.40px;font-size:13px;color:#222;font-weight:normal;letter-spacing:.2px;word-spacing:-.8px">1</div>
<div class="t" style="left:961.5px;top:411.40px;font-size:13px;color:#222;font-weight:normal;letter-spacing:.2px;word-spacing:-.8px">813,01</div>
<div class="t" style="left:1075px;top:411.40px;font-size:13px;color:#222;font-weight:normal;letter-spacing:.2px;word-spacing:-.8px">1 000,00</div>
<div class="t" style="left:1188.5px;top:411.40px;font-size:13px;color:#222;font-weight:normal;letter-spacing:.2px;word-spacing:-.8px">-</div>
<div class="t" style="left:1305px;top:411.40px;font-size:13px;color:#222;font-weight:normal;letter-spacing:.2px;word-spacing:-.8px">Firma serwisowa</div>
<div class="t" style="left:1533.5px;top:411.40px;font-size:13px;color:#222;font-weight:normal;letter-spacing:.2px;word-spacing:-.8px">-</div>
<div class="t" style="left:1650px;top:411.40px;font-size:13px;color:#222;font-weight:normal;letter-spacing:.2px;word-spacing:-.8px">Magazyn I</div>
<div class="a" style="left:347px;top:448.4px;width:11px;height:11px;border:1.2px solid #7a7ef0;border-radius:3px;background:#fff"></div>
<div class="t" style="left:378.6px;top:451.40px;font-size:13px;color:#222;font-weight:normal;letter-spacing:.2px;word-spacing:-.8px">PZ</div>
<div class="t" style="left:492.2px;top:451.40px;font-size:13px;color:#2d30d2;font-weight:normal;letter-spacing:0px">PZ/3/MG-II</div>
<div class="t" style="left:621.7px;top:451.40px;font-size:13px;color:#257645;font-weight:normal;letter-spacing:.2px;word-spacing:-.8px">Zatwierdzony</div>
<div class="t" style="left:734.8px;top:451.40px;font-size:13px;color:#222;font-weight:normal;letter-spacing:.2px;word-spacing:-.8px">14.07.2022</div>
<div class="t" style="left:848.4px;top:451.40px;font-size:13px;color:#222;font-weight:normal;letter-spacing:.2px;word-spacing:-.8px">1</div>
<div class="t" style="left:961.5px;top:451.40px;font-size:13px;color:#222;font-weight:normal;letter-spacing:.2px;word-spacing:-.8px">1 000,00</div>
<div class="t" style="left:1075px;top:451.40px;font-size:13px;color:#222;font-weight:normal;letter-spacing:.2px;word-spacing:-.8px">1 230,00</div>
<div class="t" style="left:1188.5px;top:451.40px;font-size:13px;color:#222;font-weight:normal;letter-spacing:.2px;word-spacing:-.8px">-</div>
<div class="t" style="left:1305px;top:451.40px;font-size:13px;color:#222;font-weight:normal;letter-spacing:.2px;word-spacing:-.8px">Firma serwisowa</div>
<div class="t" style="left:1533.5px;top:451.40px;font-size:13px;color:#222;font-weight:normal;letter-spacing:.2px;word-spacing:-.8px">-</div>
<div class="t" style="left:1650px;top:451.40px;font-size:13px;color:#222;font-weight:normal;letter-spacing:.2px;word-spacing:-.8px">Magazyn I</div>
<div class="a" style="left:347px;top:494.9px;width:11px;height:11px;border:1.2px solid #7a7ef0;border-radius:3px;background:#fff"></div>
<div class="t" style="left:378.6px;top:497.90px;font-size:13px;color:#222;font-weight:normal;letter-spacing:.2px;word-spacing:-.8px">PZ</div>
<div class="t" style="left:492.2px;top:497.90px;font-size:13px;color:#2d30d2;font-weight:normal;letter-spacing:.2px;word-spacing:-.8px">PZ/7/mag-glow</div>
<div class="t" style="left:621.7px;top:497.90px;font-size:13px;color:#257645;font-weight:normal;letter-spacing:.2px;word-spacing:-.8px">Zatwierdzony</div>
<div class="t" style="left:734.8px;top:497.90px;font-size:13px;color:#222;font-weight:normal;letter-spacing:.2px;word-spacing:-.8px">22.09.2023</div>
<div class="t" style="left:848.4px;top:497.90px;font-size:13px;color:#222;font-weight:normal;letter-spacing:.2px;word-spacing:-.8px">1</div>
<div class="t" style="left:961.5px;top:497.90px;font-size:13px;color:#222;font-weight:normal;letter-spacing:.2px;word-spacing:-.8px">2 829,00</div>
<div class="t" style="left:1075px;top:497.90px;font-size:13px;color:#222;font-weight:normal;letter-spacing:.2px;word-spacing:-.8px">3 479,67</div>
<div class="t" style="left:1188.5px;top:488.15px;font-size:13px;color:#222;font-weight:normal;letter-spacing:.2px;word-spacing:-.8px">09/2023/022/1</div>
<div class="t" style="left:1188.5px;top:507.65px;font-size:13px;color:#222;font-weight:normal;letter-spacing:.2px;word-spacing:-.8px">22.09.2023</div>
<div class="t" style="left:1305px;top:488.15px;font-size:13px;color:#222;font-weight:normal;letter-spacing:.2px;word-spacing:-.8px">Infonet Projekt SA</div>
<div class="t" style="left:1305px;top:507.65px;font-size:13px;color:#222;font-weight:normal;letter-spacing:.2px;word-spacing:-.8px">Prod</div>
<div class="t" style="left:1533.5px;top:497.90px;font-size:13px;color:#222;font-weight:normal;letter-spacing:.2px;word-spacing:-.8px">-</div>
<div class="t" style="left:1650px;top:497.90px;font-size:13px;color:#222;font-weight:normal;letter-spacing:.2px;word-spacing:-.8px">glowny</div>
<div class="a" style="left:347px;top:567.4px;width:11px;height:11px;border:1.2px solid #7a7ef0;border-radius:3px;background:#fff"></div>
<div class="t" style="left:378.6px;top:570.40px;font-size:13px;color:#222;font-weight:normal;letter-spacing:.2px;word-spacing:-.8px">PZ</div>
<div class="t" style="left:492.2px;top:570.40px;font-size:13px;color:#2d30d2;font-weight:normal;letter-spacing:.2px;word-spacing:-.8px">PZ/10/123456789</div>
<div class="t" style="left:621.7px;top:570.40px;font-size:13px;color:#676767;font-weight:normal;letter-spacing:.2px;word-spacing:-.8px">Roboczy</div>
<div class="t" style="left:734.8px;top:570.40px;font-size:13px;color:#222;font-weight:normal;letter-spacing:.2px;word-spacing:-.8px">17.01.2024</div>
<div class="t" style="left:848.4px;top:570.40px;font-size:13px;color:#222;font-weight:normal;letter-spacing:.2px;word-spacing:-.8px">1</div>
<div class="t" style="left:961.5px;top:570.40px;font-size:13px;color:#222;font-weight:normal;letter-spacing:.2px;word-spacing:-.8px">5 000,00</div>
<div class="t" style="left:1075px;top:570.40px;font-size:13px;color:#222;font-weight:normal;letter-spacing:.2px;word-spacing:-.8px">6 150,00</div>
<div class="t" style="left:1188.5px;top:570.40px;font-size:13px;color:#222;font-weight:normal;letter-spacing:.2px;word-spacing:-.8px">1 17.01.2024</div>
<div class="t" style="left:1305px;top:541.15px;font-size:13px;color:#222;font-weight:normal;letter-spacing:-.25px;word-spacing:-.5px">INFONET</div>
<div class="t" style="left:1305px;top:560.65px;font-size:13px;color:#222;font-weight:normal;letter-spacing:-.25px;word-spacing:-.5px">PROJEKT</div>
<div class="t" style="left:1305px;top:580.15px;font-size:13px;color:#222;font-weight:normal;letter-spacing:-.25px;word-spacing:-.5px">SPÓŁKA</div>
<div class="t" style="left:1305px;top:599.65px;font-size:13px;color:#222;font-weight:normal;letter-spacing:-.25px;word-spacing:-.5px">AKCYJNA</div>
<div class="t" style="left:1533.5px;top:570.40px;font-size:13px;color:#222;font-weight:normal;letter-spacing:.2px;word-spacing:-.8px">-</div>
<div class="t" style="left:1650px;top:560.65px;font-size:13px;color:#222;font-weight:normal;letter-spacing:.2px;word-spacing:-.8px">testowy</div>
<div class="t" style="left:1650px;top:580.15px;font-size:13px;color:#222;font-weight:normal;letter-spacing:.2px;word-spacing:-.8px">magazyn</div>
<div class="a" style="left:347px;top:633.4px;width:11px;height:11px;border:1.2px solid #7a7ef0;border-radius:3px;background:#fff"></div>
<div class="t" style="left:378.6px;top:636.40px;font-size:13px;color:#222;font-weight:normal;letter-spacing:.2px;word-spacing:-.8px">PW</div>
<div class="t" style="left:492.2px;top:636.40px;font-size:13px;color:#2d30d2;font-weight:normal;letter-spacing:.2px;word-spacing:-.8px">PW/1/mag-glow</div>
<div class="t" style="left:621.7px;top:636.40px;font-size:13px;color:#257645;font-weight:normal;letter-spacing:.2px;word-spacing:-.8px">Zatwierdzony</div>
<div class="t" style="left:734.8px;top:636.40px;font-size:13px;color:#222;font-weight:normal;letter-spacing:.2px;word-spacing:-.8px">16.10.2023</div>
<div class="t" style="left:848.4px;top:636.40px;font-size:13px;color:#222;font-weight:normal;letter-spacing:.2px;word-spacing:-.8px">1</div>
<div class="t" style="left:961.5px;top:636.40px;font-size:13px;color:#222;font-weight:normal;letter-spacing:.2px;word-spacing:-.8px">12 000,00</div>
<div class="t" style="left:1075px;top:636.40px;font-size:13px;color:#222;font-weight:normal;letter-spacing:.2px;word-spacing:-.8px">14 760,00</div>
<div class="t" style="left:1188.5px;top:636.40px;font-size:13px;color:#222;font-weight:normal;letter-spacing:.2px;word-spacing:-.8px">-</div>
<div class="t" style="left:1533.5px;top:636.40px;font-size:13px;color:#222;font-weight:normal;letter-spacing:.2px;word-spacing:-.8px">-</div>
<div class="t" style="left:1650px;top:636.40px;font-size:13px;color:#222;font-weight:normal;letter-spacing:.2px;word-spacing:-.8px">glowny</div>
<div class="a" style="left:347px;top:679.9px;width:11px;height:11px;border:1.2px solid #7a7ef0;border-radius:3px;background:#fff"></div>
<div class="t" style="left:378.6px;top:682.90px;font-size:13px;color:#222;font-weight:normal;letter-spacing:.2px;word-spacing:-.8px">RW</div>
<div class="t" style="left:492.2px;top:682.90px;font-size:13px;color:#2d30d2;font-weight:normal;letter-spacing:.2px;word-spacing:-.8px">RW/1/mag-glow</div>
<div class="t" style="left:621.7px;top:682.90px;font-size:13px;color:#257645;font-weight:normal;letter-spacing:.2px;word-spacing:-.8px">Zatwierdzony</div>
<div class="t" style="left:734.8px;top:682.90px;font-size:13px;color:#222;font-weight:normal;letter-spacing:.2px;word-spacing:-.8px">15.09.2023</div>
<div class="t" style="left:848.4px;top:682.90px;font-size:13px;color:#222;font-weight:normal;letter-spacing:.2px;word-spacing:-.8px">1</div>
<div class="t" style="left:961.5px;top:682.90px;font-size:13px;color:#222;font-weight:normal;letter-spacing:.2px;word-spacing:-.8px">1 476,00</div>
<div class="t" style="left:1075px;top:682.90px;font-size:13px;color:#222;font-weight:normal;letter-spacing:.2px;word-spacing:-.8px">1 815,48</div>
<div class="t" style="left:1188.5px;top:682.90px;font-size:13px;color:#222;font-weight:normal;letter-spacing:.2px;word-spacing:-.8px">-</div>
<div class="t" style="left:1421.5px;top:673.15px;font-size:13px;color:#222;font-weight:normal;letter-spacing:.2px;word-spacing:-.8px">CRM Infonet</div>
<div class="t" style="left:1421.5px;top:692.65px;font-size:13px;color:#222;font-weight:normal;letter-spacing:.2px;word-spacing:-.8px">Projekt SA</div>
<div class="t" style="left:1533.5px;top:682.90px;font-size:13px;color:#222;font-weight:normal;letter-spacing:.2px;word-spacing:-.8px">-</div>
<div class="t" style="left:1650px;top:682.90px;font-size:13px;color:#222;font-weight:normal;letter-spacing:.2px;word-spacing:-.8px">glowny</div>
<div class="a" style="left:347px;top:752.4px;width:11px;height:11px;border:1.2px solid #7a7ef0;border-radius:3px;background:#fff"></div>
<div class="t" style="left:378.6px;top:755.40px;font-size:13px;color:#222;font-weight:normal;letter-spacing:.2px;word-spacing:-.8px">PZ</div>
<div class="t" style="left:492.2px;top:755.40px;font-size:13px;color:#2d30d2;font-weight:normal;letter-spacing:.2px;word-spacing:-.8px">PZ/5/mag-glow</div>
<div class="t" style="left:621.7px;top:755.40px;font-size:13px;color:#257645;font-weight:normal;letter-spacing:.2px;word-spacing:-.8px">Zatwierdzony</div>
<div class="t" style="left:734.8px;top:755.40px;font-size:13px;color:#222;font-weight:normal;letter-spacing:.2px;word-spacing:-.8px">15.09.2023</div>
<div class="t" style="left:848.4px;top:755.40px;font-size:13px;color:#222;font-weight:normal;letter-spacing:.2px;word-spacing:-.8px">1</div>
<div class="t" style="left:961.5px;top:755.40px;font-size:13px;color:#222;font-weight:normal;letter-spacing:.2px;word-spacing:-.8px">1 599,00</div>
<div class="t" style="left:1075px;top:755.40px;font-size:13px;color:#222;font-weight:normal;letter-spacing:.2px;word-spacing:-.8px">1 966,77</div>
<div class="t" style="left:1188.5px;top:745.65px;font-size:13px;color:#222;font-weight:normal;letter-spacing:.2px;word-spacing:-.8px">01/2023</div>
<div class="t" style="left:1188.5px;top:765.15px;font-size:13px;color:#222;font-weight:normal;letter-spacing:.2px;word-spacing:-.8px">15.09.2023</div>
<div class="t" style="left:1305px;top:726.15px;font-size:13px;color:#222;font-weight:normal;letter-spacing:-.25px;word-spacing:-.5px">INFONET</div>
<div class="t" style="left:1305px;top:745.65px;font-size:13px;color:#222;font-weight:normal;letter-spacing:-.25px;word-spacing:-.5px">PROJEKT</div>
<div class="t" style="left:1305px;top:765.15px;font-size:13px;color:#222;font-weight:normal;letter-spacing:-.25px;word-spacing:-.5px">SPÓŁKA</div>
<div class="t" style="left:1305px;top:784.65px;font-size:13px;color:#222;font-weight:normal;letter-spacing:-.25px;word-spacing:-.5px">AKCYJNA</div>
<div class="t" style="left:1533.5px;top:755.40px;font-size:13px;color:#222;font-weight:normal;letter-spacing:.2px;word-spacing:-.8px">-</div>
<div class="t" style="left:1650px;top:755.40px;font-size:13px;color:#222;font-weight:normal;letter-spacing:.2px;word-spacing:-.8px">glowny</div>
<div class="a" style="left:347px;top:824.9px;width:11px;height:11px;border:1.2px solid #7a7ef0;border-radius:3px;background:#fff"></div>
<div class="t" style="left:378.6px;top:827.90px;font-size:13px;color:#222;font-weight:normal;letter-spacing:.2px;word-spacing:-.8px">PZ</div>
<div class="t" style="left:492.2px;top:827.90px;font-size:13px;color:#2d30d2;font-weight:normal;letter-spacing:0px">PZ/1/MG-II</div>
<div class="t" style="left:621.7px;top:827.90px;font-size:13px;color:#257645;font-weight:normal;letter-spacing:.2px;word-spacing:-.8px">Zatwierdzony</div>
<div class="t" style="left:734.8px;top:827.90px;font-size:13px;color:#222;font-weight:normal;letter-spacing:.2px;word-spacing:-.8px">14.07.2022</div>
<div class="t" style="left:848.4px;top:827.90px;font-size:13px;color:#222;font-weight:normal;letter-spacing:.2px;word-spacing:-.8px">1</div>
<div class="t" style="left:961.5px;top:827.90px;font-size:13px;color:#222;font-weight:normal;letter-spacing:.2px;word-spacing:-.8px">0,00</div>
<div class="t" style="left:1075px;top:827.90px;font-size:13px;color:#222;font-weight:normal;letter-spacing:.2px;word-spacing:-.8px">0,00</div>
<div class="t" style="left:1188.5px;top:818.15px;font-size:13px;color:#222;font-weight:normal;letter-spacing:.2px;word-spacing:-.8px">1/1/2022</div>
<div class="t" style="left:1188.5px;top:837.65px;font-size:13px;color:#222;font-weight:normal;letter-spacing:.2px;word-spacing:-.8px">13.07.2022</div>
<div class="t" style="left:1305px;top:827.90px;font-size:13px;color:#222;font-weight:normal;letter-spacing:.2px;word-spacing:-.8px">Firma serwisowa</div>
<div class="t" style="left:1533.5px;top:827.90px;font-size:13px;color:#222;font-weight:normal;letter-spacing:.2px;word-spacing:-.8px">-</div>
<div class="t" style="left:1650px;top:827.90px;font-size:13px;color:#222;font-weight:normal;letter-spacing:.2px;word-spacing:-.8px">Magazyn I</div>
<div class="a" style="left:339.3px;top:528.3px;width:1519.2px;height:87.1px;border:4px solid #8ed444;border-radius:7px;box-shadow:inset 0 0 8px rgba(0,0,0,.33),0 2px 5px rgba(0,0,0,.12)"></div>
<svg style="left:1761.2px;top:564px" width="30" height="26" viewBox="-15 -13 30 26"><polygon points="-15,0 -7.5,-13 7.5,-13 15,0 7.5,13 -7.5,13" fill="#e1e6fc"/><path d="M-7.5 0 C-4.5 -6 4.5 -6 7.5 0 C4.5 6 -4.5 6 -7.5 0 Z" fill="#9599ea"/><circle r="3.5" fill="#fff"/><circle r="2.6" fill="#3434c8"/><circle cx="-.9" cy="-1" r=".9" fill="#fff"/></svg>
<svg style="left:1793.9px;top:564px" width="30" height="26" viewBox="-15 -13 30 26"><polygon points="-15,0 -7.5,-13 7.5,-13 15,0 7.5,13 -7.5,13" fill="#e1e6fc"/><g fill="none" stroke="#3434c8" stroke-width="1.15"><path d="M-1 -5.2 H-5 A1.2 1.2 0 0 0 -6.2 -4 V5 A1.2 1.2 0 0 0 -5 6.2 H4 A1.2 1.2 0 0 0 5.2 5 V1.5"/><path d="M-2.5 2.5 L-2 -0.5 L4 -6.3 A1.3 1.3 0 0 1 6.3 -4 L0.5 2 Z"/></g></svg>
<svg style="left:1826.4px;top:564px" width="30" height="26" viewBox="-15 -13 30 26"><polygon points="-15,0 -7.5,-13 7.5,-13 15,0 7.5,13 -7.5,13" fill="#e1e6fc"/><g fill="none" stroke="#3434c8" stroke-width="1.1"><path d="M-5.6 -4.2 H5.6 M-2.2 -4.2 V-5.9 H2.2 V-4.2"/><path d="M-4.3 -4.2 V5.6 A1 1 0 0 0 -3.3 6.6 H3.3 A1 1 0 0 0 4.3 5.6 V-4.2"/></g><g stroke="#5a4fd0" stroke-width=".9"><path d="M-1.8 -2.2 V4.6 M0 -2.2 V4.6 M1.8 -2.2 V4.6"/></g></svg>
<div class="a" style="left:340px;top:861px;width:1523px;height:45px;background:#f8f9fb;border-top:2px solid #dfe1e6;border-radius:0 0 4px 4px"></div>
<svg style="left:355px;top:878px" width="140" height="14" viewBox="355 878 140 14"><g fill="#6b6b6b"><rect x="357.3" y="881" width="1.6" height="8"/><path d="M365 881 V889 L359 885 Z"/><path d="M396.3 881 V889 L390 885 Z"/><path d="M451.5 881 V889 L457.6 885 Z"/><path d="M480 881 V889 L486.2 885 Z"/><rect x="486.4" y="881" width="1.6" height="8"/></g></svg>
<div class="a" style="left:408px;top:869px;width:31px;height:31px;background:#cdd0f1"></div>
<div class="t" style="left:419.8px;top:877.90px;font-size:13px;color:#2b2fd0;font-weight:normal;">1</div>
<div class="t" style="left:514px;top:877.90px;font-size:13px;color:#222;font-weight:normal;letter-spacing:.2px;word-spacing:-.8px">Strona</div>
<div class="a" style="left:559.5px;top:869px;width:62px;height:29px;background:#f7f8fb;border:1px solid #e3e8f8;border-radius:5px"></div>
<div class="t" style="left:572px;top:877.90px;font-size:13px;color:#222;font-weight:normal;">1</div>
<div class="t" style="left:631.6px;top:877.90px;font-size:13px;color:#222;font-weight:normal;letter-spacing:.2px;word-spacing:-.8px">z 1</div>
<div class="a" style="left:661px;top:869px;width:63px;height:29px;background:#f7f8fb;border:1px solid #e3e8f8;border-radius:5px;overflow:hidden"><div class="a" style="left:36px;top:0;width:28px;height:29px;background:#e6eafd"></div></div>
<div class="t" style="left:672.3px;top:877.90px;font-size:13px;color:#222;font-weight:normal;">20</div>
<svg style="left:707px;top:880px" width="10" height="8" viewBox="0 0 10 8"><path d="M.4 .8 H9.6 L5 6.4 Z" fill="#2f37d6"/></svg>
<div class="t" style="left:733.3px;top:877.90px;font-size:13px;color:#222;font-weight:normal;letter-spacing:.2px;word-spacing:-.8px">na stronę</div>
<div class="t" style="left:1606px;top:877.90px;font-size:13px;color:#222;font-weight:normal;letter-spacing:.08px">Wyświetlanie elementów 1 - 12 z 12</div>
<svg style="left:1834px;top:876.8px" width="18" height="18" viewBox="-9 -9 18 18"><path d="M0.5 -6 A6 6 0 1 0 4.91 -3.44" fill="none" stroke="#1f2024" stroke-width="1.75"/><path d="M0.3 -9 L4.6 -6 L0.3 -3 Z" fill="#1f2024"/></svg>
<div class="a" style="left:1903px;top:0;width:17px;height:919px;background:#f1f1f1"></div>
<div class="a" style="left:1905px;top:190px;width:13px;height:712px;background:#c1c1c1"></div>
<svg style="left:1903px;top:0" width="17" height="17" viewBox="0 0 17 17"><path d="M4.5 10.5 H12.5 L8.5 6 Z" fill="#505050"/></svg>
<svg style="left:1903px;top:902px" width="17" height="17" viewBox="0 0 17 17"><path d="M4.5 6 H12.5 L8.5 10.5 Z" fill="#a3a3a3"/></svg>
</body></html>
